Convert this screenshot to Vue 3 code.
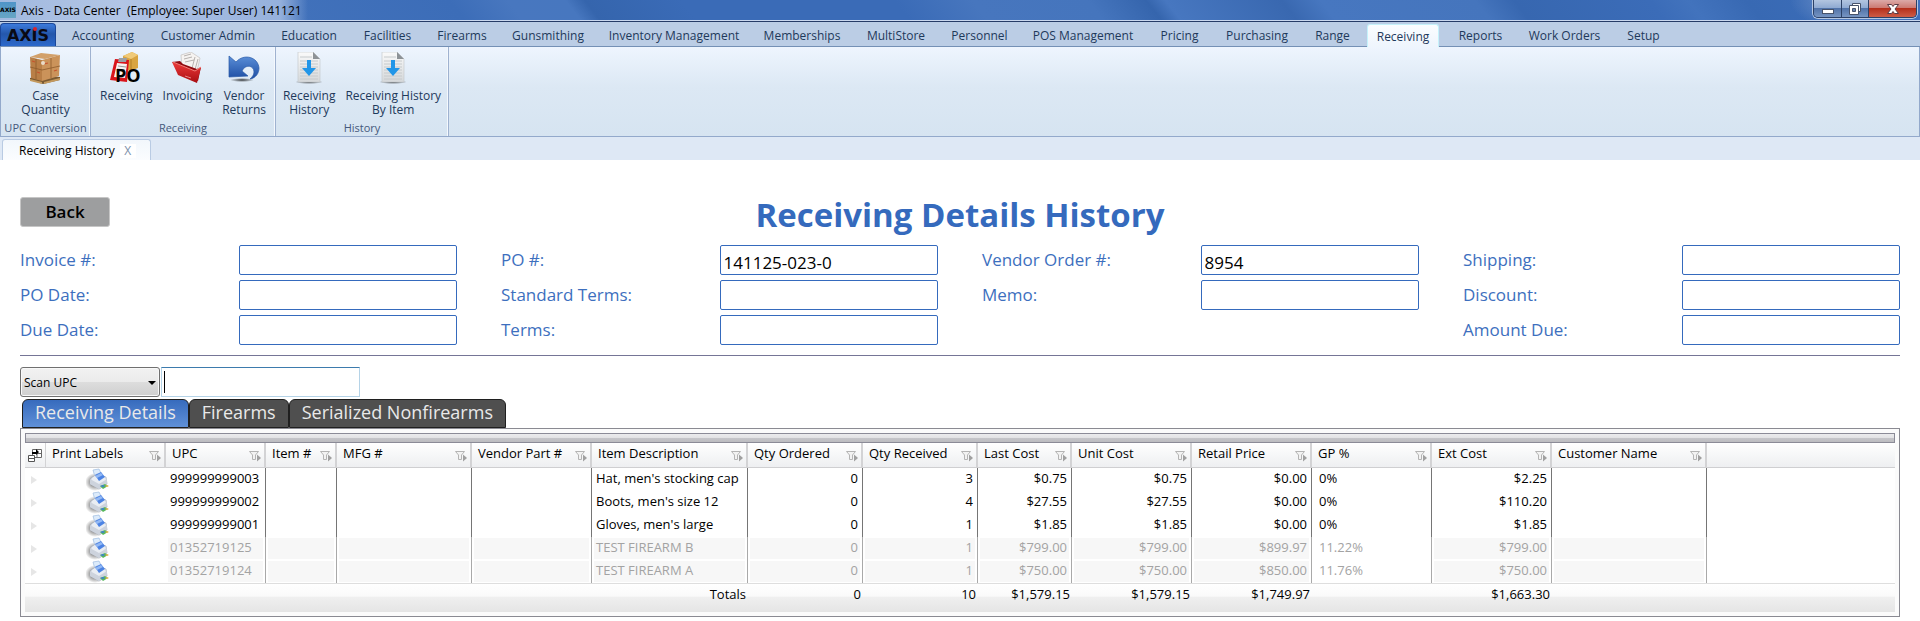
<script setup>
import { ref } from 'vue'

const ribbonTabs = [
  'Accounting', 'Customer Admin', 'Education', 'Facilities', 'Firearms', 'Gunsmithing',
  'Inventory Management', 'Memberships', 'MultiStore', 'Personnel', 'POS Management', 'Pricing',
  'Purchasing', 'Range', 'Receiving', 'Reports', 'Work Orders', 'Setup',
]
const activeRibbonTab = ref('Receiving')

const ribbonGroups = [
  { name: 'UPC Conversion', id: 'upc', tools: [{ icon: 'crate', lines: ['Case', 'Quantity'] }] },
  {
    name: 'Receiving',
    id: 'receiving',
    tools: [
      { icon: 'po', lines: ['Receiving'] },
      { icon: 'folder', lines: ['Invoicing'] },
      { icon: 'undo', lines: ['Vendor', 'Returns'] },
    ],
  },
  {
    name: 'History',
    id: 'history',
    tools: [
      { icon: 'doc', lines: ['Receiving', 'History'] },
      { icon: 'doc', lines: ['Receiving History', 'By Item'] },
    ],
  },
]

const fieldColumns = ref([
  [
    { id: 'invoice', label: 'Invoice #:', value: '' },
    { id: 'po-date', label: 'PO Date:', value: '' },
    { id: 'due-date', label: 'Due Date:', value: '' },
  ],
  [
    { id: 'po', label: 'PO #:', value: '141125-023-0' },
    { id: 'std-terms', label: 'Standard Terms:', value: '' },
    { id: 'terms', label: 'Terms:', value: '' },
  ],
  [
    { id: 'vendor-order', label: 'Vendor Order #:', value: '8954' },
    { id: 'memo', label: 'Memo:', value: '' },
  ],
  [
    { id: 'shipping', label: 'Shipping:', value: '' },
    { id: 'discount', label: 'Discount:', value: '' },
    { id: 'amount-due', label: 'Amount Due:', value: '' },
  ],
])

const detailTabs = ['Receiving Details', 'Firearms', 'Serialized Nonfirearms']
const activeDetailTab = ref('Receiving Details')
const scanMode = ref('Scan UPC')
const scanText = ref('')

const columns = [
  { key: 'upc', title: 'UPC', width: 100 },
  { key: 'item', title: 'Item #', width: 71 },
  { key: 'mfg', title: 'MFG #', width: 135 },
  { key: 'vendorPart', title: 'Vendor Part #', width: 120 },
  { key: 'description', title: 'Item Description', width: 156 },
  { key: 'ordered', title: 'Qty Ordered', width: 115, numeric: true },
  { key: 'received', title: 'Qty Received', width: 115, numeric: true },
  { key: 'lastCost', title: 'Last Cost', width: 94, numeric: true },
  { key: 'unitCost', title: 'Unit Cost', width: 120, numeric: true },
  { key: 'retail', title: 'Retail Price', width: 120, numeric: true },
  { key: 'gp', title: 'GP %', width: 120, plain: true },
  { key: 'extCost', title: 'Ext Cost', width: 120, numeric: true },
  { key: 'customer', title: 'Customer Name', width: 155 },
]

const rows = [
  { upc: '999999999003', description: "Hat, men's stocking cap", ordered: 0, received: 3, lastCost: '$0.75', unitCost: '$0.75', retail: '$0.00', gp: '0%', extCost: '$2.25' },
  { upc: '999999999002', description: "Boots, men's size 12", ordered: 0, received: 4, lastCost: '$27.55', unitCost: '$27.55', retail: '$0.00', gp: '0%', extCost: '$110.20' },
  { upc: '999999999001', description: "Gloves, men's large", ordered: 0, received: 1, lastCost: '$1.85', unitCost: '$1.85', retail: '$0.00', gp: '0%', extCost: '$1.85' },
  { upc: '01352719125', description: 'TEST FIREARM B', ordered: 0, received: 1, lastCost: '$799.00', unitCost: '$799.00', retail: '$899.97', gp: '11.22%', extCost: '$799.00', disabled: true },
  { upc: '01352719124', description: 'TEST FIREARM A', ordered: 0, received: 1, lastCost: '$750.00', unitCost: '$750.00', retail: '$850.00', gp: '11.76%', extCost: '$750.00', disabled: true },
]

const totals = {
  description: 'Totals', ordered: 0, received: 10, lastCost: '$1,579.15',
  unitCost: '$1,579.15', retail: '$1,749.97', extCost: '$1,663.30',
}
</script>

<template>
  <div class="window">
    <svg class="defs" width="0" height="0" aria-hidden="true">
      <defs>
        <linearGradient id="blueArrow" x1="0" y1="0" x2="0" y2="1">
          <stop offset="0" stop-color="#5b8fd8" /><stop offset="1" stop-color="#1d4da3" />
        </linearGradient>
        <linearGradient id="redFolder" x1="0" y1="0" x2="0" y2="1">
          <stop offset="0" stop-color="#ee3b3b" /><stop offset="1" stop-color="#a80d12" />
        </linearGradient>
        <linearGradient id="paper" x1="0" y1="0" x2="0" y2="1">
          <stop offset="0" stop-color="#fafafa" /><stop offset="1" stop-color="#d5d8da" />
        </linearGradient>
        <radialGradient id="softShadow">
          <stop offset="0" stop-color="#000" stop-opacity=".75" /><stop offset="1" stop-color="#000" stop-opacity="0" />
        </radialGradient>
        <symbol id="icon-crate" viewBox="0 0 32 32">
          <path d="M1 26l11-3 19 2v3l-17 4-13-4z" fill="#7b5a32" />
          <path d="M1 27l12 3v2L1 29zM15 30l16-4v2l-16 4z" fill="#c49a5e" />
          <path d="M1 5L12 1l19 2-15 4z" fill="#d2a06a" />
          <path d="M1 5l12 3v21L2 26z" fill="#b97f47" />
          <path d="M13 8l18-5-1 21-17 5z" fill="#cb935a" />
          <path d="M1 15l12 3 18-4M7 7v20M22 6v20" fill="none" stroke="#8d5a2c" stroke-width=".8" />
          <path d="M3 9l3 1M8 20l3 1M15 12l4-1M25 19l3-1" stroke="#c5532e" stroke-width="1.2" />
          <circle cx="14" cy="11" r="2" fill="#eadcc8" />
        </symbol>
        <symbol id="icon-po" viewBox="0 0 32 32">
          <path d="M13 4l9-4 6 3v13l-8 3-7-3z" fill="#d9a441" />
          <path d="M13 4l8 3 7-4-6-3z" fill="#f0ca79" />
          <path d="M21 7v12" stroke="#b27f27" />
          <path d="M5 7l14 1-2 22-17-2z" fill="#d9141b" />
          <path d="M7 11l10 1-2 14-11-1z" fill="#f7f3f3" />
          <path d="M9 6h8l-1 4H8z" fill="#9ba0a5" />
          <path d="M8 14l8 1M7 17l8 1" stroke="#999" />
          <text x="5" y="30" class="po-text">PO</text>
        </symbol>
        <symbol id="icon-folder" viewBox="0 0 32 32">
          <path d="M10 3l10-3 9 6-4 18-14-8z" fill="#f6f3f1" stroke="#c6c1be" stroke-width=".7" />
          <path d="M13 4l7-2M13 7l8-2M14 10l9-2M24 5l-4 15M27 7l-4 14" stroke="#a5a09d" stroke-width=".8" />
          <path d="M1 10l8-1 3 3 14 5 4-2-3 14-9-3z" fill="#8f0b10" />
          <path d="M1 10l23 9 6-4-4 16-19-8z" fill="url(#redFolder)" />
          <path d="M2 10l22 9 6-4" fill="none" stroke="#ff8a82" stroke-width=".9" />
          <path d="M14 24l6 2" stroke="#f2a2a0" stroke-width=".8" />
        </symbol>
        <symbol id="icon-undo" viewBox="0 0 32 32">
          <ellipse cx="14" cy="28" rx="12" ry="2" fill="url(#softShadow)" />
          <path d="M1 4l0 21 19-1-6-5c3-7 12-6 12 1 0 3-2 5-4 7 6-1 9-6 9-11C30 5 16 1 8 10z" fill="url(#blueArrow)" stroke="#2a5aa8" stroke-width=".7" />
        </symbol>
        <symbol id="icon-doc" viewBox="0 0 32 32">
          <ellipse cx="16" cy="30" rx="14" ry="2" fill="url(#softShadow)" />
          <path d="M5 0h15l7 7v23H5z" fill="url(#paper)" stroke="#c6cacd" stroke-width=".7" />
          <path d="M20 0l7 7h-7z" fill="#8d9296" />
          <path d="M7 5h12M7 9h18M7 12h18M7 15h18M7 18h18M7 21h18M7 24h18M7 27h18" stroke="#c6cacc" />
          <path d="M14 8h4v8h5l-7 8-7-8h5z" fill="#2196e8" />
        </symbol>
      </defs>
    </svg>

    <header class="titlebar">
      <span class="app-icon">AXIS</span>
      <span class="title-text">Axis - Data Center&nbsp; (Employee: Super User) 141121</span>
      <div class="win-buttons">
        <button type="button" class="win-btn minimize" aria-label="Minimize">
          <svg width="14" height="12" viewBox="0 0 14 12"><rect x="1.500" y="6.500" width="11" height="4" fill="#fff" stroke="#47536b" /></svg>
        </button>
        <button type="button" class="win-btn restore" aria-label="Restore">
          <svg width="14" height="14" viewBox="0 0 14 14">
            <path d="M4.500 1.500h8v8h-8z" fill="#fff" stroke="#47536b" />
            <path d="M1.500 3.500h9v9h-9z" fill="#fff" stroke="#47536b" /><path d="M4.500 6.500h3v3h-3z" fill="#6a86b4" stroke="#47536b" />
          </svg>
        </button>
        <button type="button" class="win-btn close" aria-label="Close">
          <svg width="14" height="12" viewBox="0 0 14 12"><path d="M1.500 1.500h4L7 3.500l1.500-2h4L9 6l3.500 4.500h-4L7 8.500l-1.500 2h-4L5 6z" fill="#fff" stroke="#5b3b45" /></svg>
        </button>
      </div>
    </header>

    <nav class="ribbon-tabs">
      <button type="button" class="axis-button">AX<span class="logo-i">I</span>S</button>
      <button
        v-for="tab in ribbonTabs"
        :key="tab"
        type="button"
        class="ribbon-tab"
        :class="{ active: tab === activeRibbonTab }"
        @click="activeRibbonTab = tab"
      >{{ tab }}</button>
    </nav>

    <section class="ribbon">
      <div v-for="group in ribbonGroups" :key="group.id" class="group" :class="group.id">
        <div class="tools">
          <button v-for="tool in group.tools" :key="tool.lines.join()" type="button" class="tool">
            <svg width="32" height="32" aria-hidden="true"><use :href="'#icon-' + tool.icon" /></svg>
            <span v-for="line in tool.lines" :key="line">{{ line }}</span>
          </button>
        </div>
        <div class="group-name">{{ group.name }}</div>
      </div>
    </section>

    <div class="doc-tabs">
      <div class="doc-tab">
        <span>Receiving History</span>
        <button type="button" class="doc-close">X</button>
      </div>
    </div>

    <main class="content">
      <div class="heading">
        <button type="button" class="back">Back</button>
        <h1>Receiving Details History</h1>
      </div>

      <form class="fields" @submit.prevent>
        <div v-for="(col, i) in fieldColumns" :key="i" class="field-column">
          <template v-for="field in col" :key="field.id">
            <label :for="field.id">{{ field.label }}</label>
            <input :id="field.id" v-model="field.value" type="text" />
          </template>
        </div>
      </form>

      <div class="scan">
        <div class="select-box">
          <select v-model="scanMode" aria-label="Scan mode">
            <option>Scan UPC</option>
          </select>
          <svg width="8" height="4" viewBox="0 0 8 4" aria-hidden="true"><path d="M0 0h8L4 4z" /></svg>
        </div>
        <input v-model="scanText" type="text" class="scan-input" aria-label="Scan UPC" />
      </div>

      <div class="detail-tabs">
        <button
          v-for="tab in detailTabs"
          :key="tab"
          type="button"
          class="detail-tab"
          :class="{ active: tab === activeDetailTab }"
          @click="activeDetailTab = tab"
        >{{ tab }}</button>
      </div>

      <section class="panel">
        <div class="group-bar"></div>
        <table>
          <colgroup>
            <col class="c-expand" />
            <col class="c-print" />
            <col v-for="c in columns" :key="c.key" :style="{ width: c.width + 'px' }" />
            <col />
          </colgroup>
          <thead>
            <tr>
              <th class="chooser">
                <svg width="15" height="15" viewBox="0 0 15 15" aria-hidden="true">
                  <path d="M4.500 1.500h9v8h-9zM4.500 5.500h9M9 5v4" fill="#fff" stroke="#666" />
                  <path d="M.5 7.500h6v6h-6zM.5 10.500h6" fill="#fff" stroke="#555" />
                  <path d="M4 6V4h4V1l3 3-3 3V6z" fill="#000" />
                </svg>
              </th>
              <th v-for="title in ['Print Labels', ...columns.map((c) => c.title)]" :key="title">
                <div class="head">
                  <span>{{ title }}</span>
                  <button type="button" class="filter" aria-label="Filter">
                    <svg width="13" height="12" viewBox="0 0 13 12">
                      <path d="M.5 1.500h9L6.500 5v4.500h-3V5z" fill="#f2f2f2" stroke="#b4b4b4" />
                      <path d="M8 4.500l4 3.500-4 3.500z" fill="#a0a0a0" />
                    </svg>
                  </button>
                </div>
              </th>
              <th class="rest"></th>
            </tr>
          </thead>
          <tbody>
            <tr v-for="row in rows" :key="row.upc" :class="{ disabled: row.disabled }">
              <td class="expand">
                <svg width="6" height="8" viewBox="0 0 6 8" aria-hidden="true"><path d="M0 0l6 4-6 4z" fill="#e6e6e6" /></svg>
              </td>
              <td class="print">
                <button type="button" aria-label="Print label">
                  <svg width="24" height="23" viewBox="0 0 24 23">
                    <ellipse cx="9" cy="14" rx="10" ry="9" fill="url(#softShadow)" />
                    <path d="M7 2l6-1 3 6-7 2z" fill="#dcebfb" stroke="#9dbbe0" stroke-width=".7" />
                    <path d="M5 10l6-4 9 3 1 7-8 5-9-5z" fill="#e9edf3" stroke="#a4abb8" stroke-width=".7" />
                    <path d="M9 7l6-3 4 5-6 4z" fill="#4c83e4" />
                    <path d="M9 8l6-3 2 2-6 3z" fill="#93b9f4" />
                    <path d="M4 11l9 5 8-5v4l-8 6-9-5z" fill="#cdd3dd" />
                    <path d="M14 18l5-2 3 2-5 3z" fill="#58b85c" />
                    <path d="M14 18l3-1 2 1-2 1z" fill="#3c7bd8" />
                    <path d="M19 18l2-1 2 1-2 1z" fill="#e9b44b" />
                  </svg>
                </button>
              </td>
              <td v-for="c in columns" :key="c.key" class="cell" :class="{ numeric: c.numeric, plain: c.plain }">
                <div>{{ row[c.key] }}</div>
              </td>
              <td></td>
            </tr>
          </tbody>
          <tfoot>
            <tr>
              <td></td>
              <td></td>
              <td v-for="c in columns" :key="c.key">{{ totals[c.key] }}</td>
              <td></td>
            </tr>
          </tfoot>
        </table>
      </section>
    </main>
  </div>
</template>

<style>
body {
  margin: 0;
  background: #fff;
}
</style>

<style scoped>
.window {
  font-family: "Open Sans", "Noto Sans", sans-serif;
  font-size: 12px;
  line-height: 14px;
  color: #000;
}
.defs { position: absolute; }
.po-text {
  font-family: "Open Sans", sans-serif;
  font-size: 18px;
  font-weight: 700;
  fill: #000;
}
button {
  font: inherit;
  color: inherit;
  padding: 0;
  margin: 0;
  border: 0;
  background: none;
  cursor: pointer;
}
input, select {
  font: inherit;
  box-sizing: border-box;
  margin: 0;
}

/* Title bar */
.titlebar {
  display: flex;
  align-items: center;
  height: 20px;
  border-bottom: 1px solid #c9d7ee;
  background:
    radial-gradient(ellipse 60px 30px at 1850px 0, #7898cc, transparent),
    linear-gradient(90deg, rgba(170, 192, 226, .9) 0, rgba(190, 206, 234, .9) 120px, rgba(170, 192, 228, .8) 280px, transparent 308px),
    linear-gradient(52deg, #4a79c0 0, #3c6db8 24%, #4877bf 27%, #4777bf 30%, #3565ad 31%, #3a6bb7 36%, #3a6bb7 47%, #4776be 51%, #4575bd 57%, #3565ad 60%, #4777c0 61%, #3968b0 67%, #4777c0 69%, #4575bd 77%, #3767b0 79%, #3b6cb8 86%, #4273bd 88%, #3869b3 91%, #3e70bd 100%);
}
.app-icon {
  width: 16px;
  height: 16px;
  line-height: 16px;
  overflow: hidden;
  background: linear-gradient(#4f94c8, #67a6c4);
  font-family: "DejaVu Sans", sans-serif;
  font-weight: bold;
  font-size: 6px;
  text-align: center;
}
.title-text {
  margin-left: 5px;
  line-height: 20px;
  padding-top: 2px;
  white-space: nowrap;
}
.win-buttons {
  display: flex;
  align-self: flex-start;
  margin-left: auto;
  margin-right: 3px;
  height: 17px;
  border: 1px solid #2c4166;
  border-top: 0;
  border-radius: 0 0 5px 5px;
  overflow: hidden;
  box-shadow: 0 0 0 1px #b5c7e2;
}
.win-btn {
  display: flex;
  align-items: center;
  justify-content: center;
  width: 27px;
  background: linear-gradient(#b3c5e0 0, #8faad2 46%, #5173a9 50%, #7795c2 100%);
  border-right: 1px solid #2c4166;
}
.win-btn.minimize { width: 28px; }
.win-btn.close {
  width: 47px;
  border-right: 0;
  background: linear-gradient(#dcaaa8 0, #cc7a72 46%, #b5301c 50%, #cd5c46 100%);
}

/* Ribbon */
.ribbon-tabs {
  display: grid;
  grid-template-columns: 56px 90px 120px 82px 75px 74px 98px 154px 102px 86px 81px 126px 67px 88px 63px 81px 71px 97px 61px;
  height: 24px;
  border-top: 1px solid #263b66;
  border-bottom: 1px solid #7490b5;
  background: #bbcde5;
  color: #1e395b;
}
.axis-button {
  margin-top: 1px;
  padding-top: 2px;
  border: 1px solid #1b4799;
  border-bottom: 0;
  border-radius: 4px 4px 0 0;
  background: linear-gradient(#3c7bdc 0, #2457ab 45%, #2c69cb 100%);
  color: #0a0a14;
  font-family: "DejaVu Sans", sans-serif;
  font-weight: bold;
  font-size: 16px;
  line-height: 20px;
}
.logo-i { position: relative; }
.logo-i::before {
  content: "";
  position: absolute;
  top: 1px;
  left: 1px;
  width: 4px;
  height: 4px;
  border-radius: 2px;
  background: #d8232e;
}
.ribbon-tab {
  padding: 3px 0 0 4px;
  line-height: 21px;
  white-space: nowrap;
}
.ribbon-tab.active {
  margin: 2px 4px -1px 5px;
  padding: 0;
  border: 1px solid #c5f2fb;
  border-bottom: 0;
  border-radius: 3px 3px 0 0;
  background: linear-gradient(#fbfdff, #eef5fd);
}
.ribbon {
  display: flex;
  height: 89px;
  border: 1px solid #93a9cb;
  border-top: 0;
  background: linear-gradient(#eef5fe 0, #dce8f4 45%, #d6e4f1 100%);
  color: #1e395b;
}
.group {
  display: flex;
  flex-direction: column;
  box-sizing: border-box;
  border-right: 1px solid #9fb2d0;
  box-shadow: inset -1px 0 #f4f8fd;
}
.group.upc { width: 90px; }
.group.receiving { width: 185px; }
.group.history { width: 173px; }
.tools {
  display: flex;
  flex: 1;
  justify-content: center;
  gap: 10px;
  padding-top: 5px;
}
.tool {
  display: flex;
  flex-direction: column;
  align-items: center;
  white-space: nowrap;
}
.tool svg { margin-bottom: 5px; }
.group-name {
  height: 15px;
  font-size: 11px;
  text-align: center;
  white-space: nowrap;
  color: #45597c;
}

/* Document tabs */
.doc-tabs {
  display: flex;
  align-items: flex-end;
  height: 23px;
  padding-left: 2px;
  background: #dee8f5;
}
.doc-tab {
  display: flex;
  align-items: center;
  gap: 5px;
  box-sizing: border-box;
  width: 149px;
  height: 21px;
  padding-top: 2px;
  padding-left: 16px;
  border: 1px solid #b9cbe3;
  border-bottom: 0;
  border-radius: 3px 3px 0 0;
  background: linear-gradient(#f2f7fc, #fbfdff);
  white-space: nowrap;
}
.doc-close {
  width: 16px;
  height: 14px;
  background: #fff;
  color: #7d90ab;
}

/* Page content */
.content { padding: 37px 20px 3px; }
.heading {
  display: grid;
  grid-template-columns: 1fr auto 1fr;
  align-items: start;
}
.back {
  width: 90px;
  height: 30px;
  border: 1px solid #c6c6c6;
  border-radius: 3px;
  background: #9d9e9f;
  font-size: 17px;
  font-weight: 600;
  line-height: 28px;
}
h1 {
  margin: 0;
  font-size: 33px;
  line-height: 36px;
  font-weight: 700;
  color: #356abd;
  white-space: nowrap;
}
.fields {
  display: grid;
  grid-template-columns: repeat(4, 1fr);
  column-gap: 44px;
  margin-top: 12px;
  padding-bottom: 10px;
  border-bottom: 1px solid #757596;
}
.field-column {
  display: grid;
  grid-template-columns: 1fr 1fr;
  grid-auto-rows: 30px;
  row-gap: 5px;
}
.fields label {
  font-size: 17px;
  line-height: 30px;
  color: #3d6fbe;
  white-space: nowrap;
}
.fields input {
  width: 100%;
  height: 30px;
  padding: 4px 3px 0;
  border: 1px solid #356abd;
  border-radius: 2px;
  background: #fff;
  font-size: 17px;
}
.scan {
  display: flex;
  gap: 1px;
  margin-top: 11px;
}
.select-box {
  position: relative;
  width: 140px;
  height: 30px;
}
.select-box select {
  width: 100%;
  height: 100%;
  padding: 2px 3px 0;
  appearance: none;
  border: 1px solid #707070;
  border-radius: 3px;
  background: linear-gradient(#f2f2f2 0, #ebebeb 50%, #dddddd 50%, #cfcfcf 100%);
  box-shadow: inset 0 0 0 1px #f8f8f8;
  color: #000;
}
.select-box svg {
  position: absolute;
  top: 14px;
  right: 4px;
  pointer-events: none;
}
.scan-input {
  width: 199px;
  height: 30px;
  border: 1px solid #b5d3e7;
  border-top-color: #3d7bad;
  background: linear-gradient(#000, #000) 2px 3px / 1px 22px no-repeat #fff;
}
.detail-tabs {
  display: flex;
  padding: 2px 2px 0;
}
.detail-tab {
  height: 29px;
  padding: 0 12px 2px;
  border: 1px solid #1f1f1f;
  border-radius: 6px 6px 0 0;
  background: #4f4f4f;
  color: #e9e9e9;
  font-size: 18px;
  line-height: 25px;
  white-space: nowrap;
}
.detail-tab.active {
  background: linear-gradient(#376bbd, #5f90d8);
}

/* Grid */
.panel {
  padding: 4px;
  border: 1px solid #8a8a92;
  background: #fbfbfb;
}
.group-bar {
  height: 8px;
  border: 1px solid #8b8b97;
  background: linear-gradient(#ebebed 0, #e2e2e4 50%, #c6c6ca 50%, #bcbcc0 100%);
}
table {
  width: 100%;
  table-layout: fixed;
  border-collapse: separate;
  border-spacing: 0;
  background: #fff;
  font-size: 13px;
}
.c-expand { width: 21px; }
.c-print { width: 120px; }
th, td {
  box-sizing: border-box;
  padding: 0;
  font-weight: 400;
  white-space: nowrap;
}
th {
  height: 25px;
  border-right: 2px solid #d3d3d5;
  border-bottom: 1px solid #cfcfd1;
  background: linear-gradient(#fff 0, #f6f7f8 50%, #eeeff1 100%);
  text-align: left;
}
th.chooser {
  border-right-width: 1px;
  padding: 5px 0 0 3px;
  vertical-align: top;
}
th.chooser svg { display: block; }
th.rest { border-right: 0; }
.head {
  display: flex;
  align-items: center;
  justify-content: space-between;
  padding-left: 6px;
  padding-right: 2px;
}
.head span { padding-bottom: 4px; line-height: 18px; }
.filter {
  width: 13px;
  height: 12px;
  margin-top: 2px;
}
.filter svg { display: block; }
tbody td { height: 23px; }
.expand { padding-left: 6px; }
.expand svg, .print svg { display: block; }
.print { padding-left: 40px; }
.print button { display: block; }
.cell { border-right: 1px solid #757575; }
.cell div {
  height: 21px;
  margin: 1px 2px;
  padding: 0 2px;
  line-height: 19px;
}
.cell.numeric div { text-align: right; }
.cell.plain div { padding-left: 5px; }
.disabled .cell { border-right-color: #a9a9a9; color: #a3a3a3; }
.disabled .cell div { background: #f7f7f7; }
.disabled .cell.plain div { background: none; }
tfoot tr { background: linear-gradient(#fff 0, #fafafa 45%, #efefef 50%, #e5e5e5 100%); }
tfoot td {
  height: 29px;
  padding: 0 2px 8px 0;
  border-top: 1px solid #dedede;
  text-align: right;
}
</style>
